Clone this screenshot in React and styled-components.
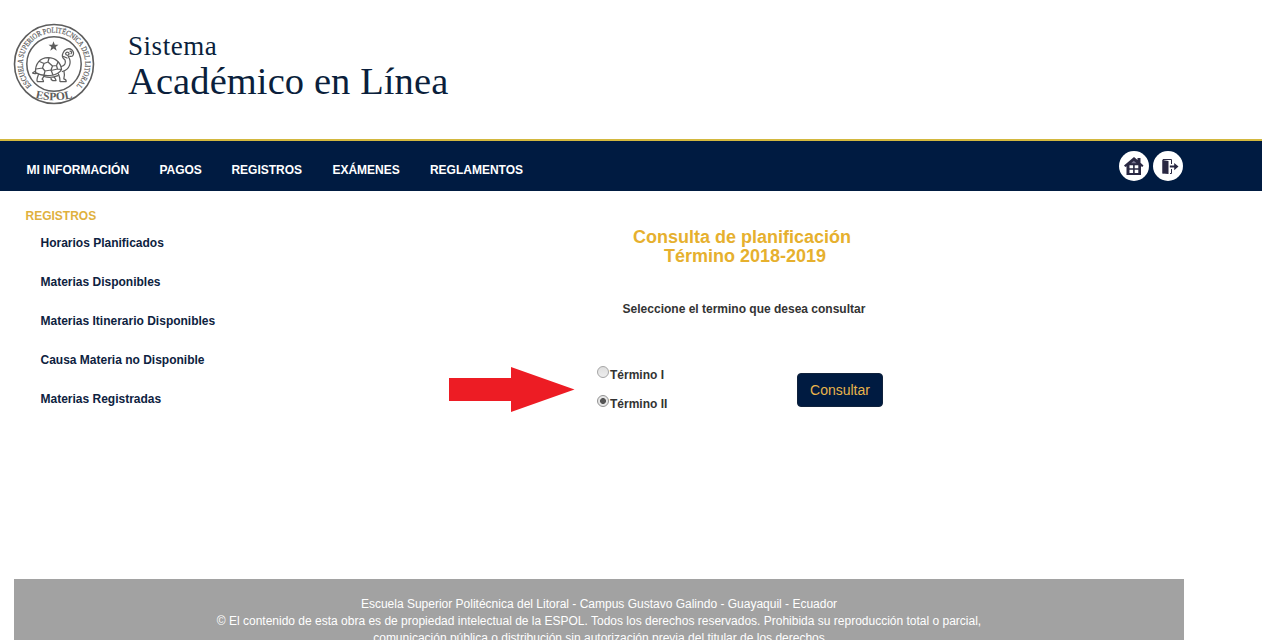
import React, { useState } from 'react';
import styled, { createGlobalStyle } from 'styled-components';

const navy = '#001b41';
const gold = '#e6b02e';

const GlobalStyle = createGlobalStyle`
  * { box-sizing: border-box; }
  body {
    margin: 0;
    background: #fff;
    font-family: "Liberation Sans", Arial, sans-serif;
    font-size: 12px;
    overflow: hidden;
  }
`;

const Page = styled.div`
  height: 640px;
  overflow: hidden;
  display: flex;
  flex-direction: column;
`;

const Header = styled.header`
  height: 139px;
  flex: none;
  display: flex;
  align-items: flex-start;
  padding: 23px 13px 0;
  gap: 33px;
`;

const Seal = styled.svg`
  width: 82px;
  height: 82px;
  flex: none;
`;

const Brand = styled.div`
  padding-top: 7px;
  font-family: "Liberation Serif", "Times New Roman", serif;
  color: #0b1f3c;
  white-space: nowrap;
`;

const BrandSmall = styled.div`
  font-size: 27px;
  line-height: 32px;
  letter-spacing: 0.55px;
`;

const BrandLarge = styled.div`
  font-size: 38.5px;
  line-height: 38px;
  letter-spacing: 0.1px;
`;

const NavBar = styled.nav`
  height: 52px;
  flex: none;
  display: flex;
  justify-content: space-between;
  background: ${navy};
  border-top: 2px solid #d3b83f;
  padding: 0 79px 0 26.4px;
`;

const Menu = styled.div`
  display: flex;
  gap: 30px;
  padding-top: 21px;
`;

const MenuItem = styled.a`
  color: #fff;
  font-weight: bold;
  line-height: 16px;
  white-space: nowrap;
  width: ${(p) => p.$width}px;
`;

const Actions = styled.div`
  display: flex;
  gap: 4px;
  padding-top: 10px;
`;

const RoundButton = styled.a`
  width: 30px;
  height: 30px;
  border-radius: 50%;
  background: #fff;
  svg { display: block; }
`;

const Main = styled.main`
  height: 388px;
  flex: none;
  display: flex;
`;

const Sidebar = styled.aside`
  width: 449px;
  padding: 17px 0 0 25.5px;
`;

const SideTitle = styled.div`
  color: #dfb13e;
  font-weight: bold;
  line-height: 16px;
`;

const SideList = styled.ul`
  list-style: none;
  margin: 0;
  padding: 11px 0 0 15px;
  display: flex;
  flex-direction: column;
  gap: 23px;
`;

const SideLink = styled.li`
  color: #0d2240;
  font-weight: bold;
  line-height: 16px;
  white-space: nowrap;
`;

const Arrow = styled.svg`
  width: 126px;
  height: 46px;
  margin-top: 175px;
  flex: none;
`;

const Panel = styled.section`
  width: 292px;
  margin-left: 21px;
  padding-top: 37px;
`;

const Heading = styled.h1`
  margin: 0;
  color: ${gold};
  font-size: 18px;
  line-height: 19px;
  text-align: center;
`;

const HeadingLine = styled.span`
  display: block;
  padding-left: ${(p) => p.$shift || 0}px;
`;

const Prompt = styled.p`
  margin: 35px 0 0;
  padding-left: 4px;
  color: #333;
  font-weight: bold;
  line-height: 16px;
  text-align: center;
`;

const FormRow = styled.form`
  display: flex;
  justify-content: space-between;
  margin-top: 48px;
  padding: 0 5px 0 1px;
`;

const Options = styled.div`
  display: flex;
  flex-direction: column;
  gap: 13px;
`;

const Option = styled.label`
  display: flex;
  align-items: flex-start;
  height: 16px;
  color: #333;
  font-weight: bold;
`;

const OptionText = styled.span`
  line-height: 16px;
  padding-top: 2px;
  white-space: nowrap;
`;

const Radio = styled.input`
  appearance: none;
  width: 12px;
  height: 12px;
  margin: 1px 1px 0 0;
  border: 1px solid #a5a5a5;
  border-radius: 50%;
  background: linear-gradient(#dedede, #ededed);
  &:checked {
    border-color: #939393;
    background: radial-gradient(circle, #555 0 2.6px, #e6e6e6 3.3px);
  }
`;

const SubmitButton = styled.button`
  width: 86px;
  height: 34px;
  margin-top: 8px;
  padding: 0;
  border: 1px solid #10223c;
  border-radius: 4px;
  background: ${navy};
  color: #e9b44b;
  font: 14px/20px "Liberation Sans", Arial, sans-serif;
`;

const Footer = styled.footer`
  flex: none;
  width: 1170px;
  height: 88px;
  margin-left: 14px;
  padding-top: 17px;
  background: #a2a2a2;
  color: #fff;
  line-height: 17px;
  text-align: center;
`;

const FooterLine = styled.div`
  white-space: nowrap;
`;

function UniversitySeal() {
  return (
    <Seal viewBox="0 0 82 82" fill="none" stroke="#5d5d5d">
      <circle cx="41" cy="41" r="39.5" strokeWidth="1.6" />
      <circle cx="41" cy="41" r="27.2" strokeWidth="1.5" />
      <path id="seal-top" d="M18.600 62.600A31.200 31.200 0 1 1 63.400 62.600" stroke="none" />
      <path id="seal-base" d="M19 74Q41 80.500 63 74" stroke="none" />
      <g fill="#5d5d5d" stroke="none" fontFamily="'Liberation Serif', serif">
        <text fontSize="7.8" stroke="#5d5d5d" strokeWidth=".2">
          <textPath href="#seal-top" textLength="146" lengthAdjust="spacingAndGlyphs">
            ESCUELA SUPERIOR POLITÉCNICA DEL LITORAL
          </textPath>
        </text>
        <text fontSize="11.5" fontWeight="bold" textAnchor="middle">
          <textPath href="#seal-base" startOffset="50%">ESPOL</textPath>
        </text>
        <path d="M40.500 18.200l1.300 3.500h3.700l-2.900 2.300 1.100 3.700-3.200-2.100-3.200 2.100 1.100-3.700-2.900-2.300h3.700z" />
      </g>
      <g strokeWidth="1.25" strokeLinejoin="round" strokeLinecap="round">
        <path d="M22.500 49.500C22 41 27 34.800 35 34.700C43 34.800 48 40 48.500 46.500C45 53.500 31 54.500 22.500 49.500Z" />
        <path d="M26.500 38.500l4.500 2 4-1.500 1-4M31 40.500l-1.500 4.500-6.500 1M29.500 45l2.500 3-1 4M32 48l6-1 1.500-4-4.500-4M39.500 43l4-.5 1.500-3.500M43.500 42.500l1 3.500 4 .5M38 47l2 5M44.500 46l-6.500 1.500" />
        <path d="M48.500 43.500c3.500-1 4.500-3.500 3.500-6.500-2-1.500-3.500-4-2-7 1.500-4 6-5.500 9-3 2 1.800 2 4.500.5 6-1.500.8-3-.2-4.200.5 3.500 5.500 2 12.500-6 15" />
        <path d="M52.500 30.500c1-2 4-1.500 3.500.5s-3 1.500-3.500-.5M57 28c1.500 0 2.200 1.800 1 2.700M50.500 33.500l3.500 1.500" />
        <path d="M22.500 48l-3 2c1 .7 2.500.8 4 .4M25.500 51.500c-1 2.500-2.200 5-1.200 7h6.200c0-1.500-.5-2-1.400-2.400l1.900-3M45.500 51c1 2.500 1.700 5 1.500 7.500h6.200c0-1.800-1.400-2.400-2.400-2.600.8-2.200.8-5 .2-7.400" />
        <path d="M31 53.500c4.500 1.300 9.500 1 14-.9M38 54.500c-.3 1.500.6 2.500 1.500 3H43c-.4-1.600-.8-2-1.600-3" />
      </g>
    </Seal>
  );
}

function HomeIcon() {
  return (
    <svg width="30" height="30" viewBox="0 0 30 30">
      <path fill="#292742" d="M15 6L5 14.500l1.300 1.500L7.500 15.200V24h14.500v-8.800l1.300.8 1.200-1.500-3-2.700V7H18.500v2z" />
      <path fill="#777590" d="M14.800 9.800l2.700 2.400h-5.400z" />
      <path fill="#fff" d="M10.500 14.300h3.600v3h-3.600zM15.700 14.300h3.600v3h-3.600zM10.500 18.800h3.600v3.200h-3.600zM15.700 18.800h3.600v3.200h-3.600z" />
    </svg>
  );
}

function ExitIcon() {
  return (
    <svg width="30" height="30" viewBox="0 0 30 30">
      <path fill="none" stroke="#292742" d="M10 22.500V8.500h8.500V13M18.500 18v4.500H17" />
      <path fill="#292742" d="M9.500 9l6 1V23l-6-.5z" />
      <path fill="#292742" d="M16.800 14.600h4.400V12l4.300 3.600-4.300 3.600v-2.600h-4.400z" />
    </svg>
  );
}

const menu = [
  { label: 'MI INFORMACIÓN', width: 103 },
  { label: 'PAGOS', width: 42 },
  { label: 'REGISTROS', width: 71 },
  { label: 'EXÁMENES', width: 67.5 },
  { label: 'REGLAMENTOS', width: 94 },
];

const links = [
  'Horarios Planificados',
  'Materias Disponibles',
  'Materias Itinerario Disponibles',
  'Causa Materia no Disponible',
  'Materias Registradas',
];

const terms = ['Término I', 'Término II'];

export default function App() {
  const [term, setTerm] = useState('Término II');
  return (
    <Page>
      <GlobalStyle />
      <Header>
        <UniversitySeal />
        <Brand>
          <BrandSmall>Sistema</BrandSmall>
          <BrandLarge>Académico en Línea</BrandLarge>
        </Brand>
      </Header>
      <NavBar>
        <Menu>
          {menu.map((m) => (
            <MenuItem key={m.label} $width={m.width}>{m.label}</MenuItem>
          ))}
        </Menu>
        <Actions>
          <RoundButton><HomeIcon /></RoundButton>
          <RoundButton><ExitIcon /></RoundButton>
        </Actions>
      </NavBar>
      <Main>
        <Sidebar>
          <SideTitle>REGISTROS</SideTitle>
          <SideList>
            {links.map((l) => <SideLink key={l}>{l}</SideLink>)}
          </SideList>
        </Sidebar>
        <Arrow viewBox="0 0 126 46">
          <path fill="#ed1c24" d="M0 12h62V1l63.500 22.500L62 46V35H0z" />
        </Arrow>
        <Panel>
          <Heading>
            <HeadingLine>Consulta de planificación</HeadingLine>
            <HeadingLine $shift={6}>Término 2018-2019</HeadingLine>
          </Heading>
          <Prompt>Seleccione el termino que desea consultar</Prompt>
          <FormRow>
            <Options>
              {terms.map((t) => (
                <Option key={t}>
                  <Radio type="radio" name="term" checked={term === t} onChange={() => setTerm(t)} />
                  <OptionText>{t}</OptionText>
                </Option>
              ))}
            </Options>
            <SubmitButton type="button">Consultar</SubmitButton>
          </FormRow>
        </Panel>
      </Main>
      <Footer>
        <FooterLine>Escuela Superior Politécnica del Litoral - Campus Gustavo Galindo - Guayaquil - Ecuador</FooterLine>
        <FooterLine>© El contenido de esta obra es de propiedad intelectual de la ESPOL. Todos los derechos reservados. Prohibida su reproducción total o parcial,</FooterLine>
        <FooterLine>comunicación pública o distribución sin autorización previa del titular de los derechos</FooterLine>
      </Footer>
    </Page>
  );
}
